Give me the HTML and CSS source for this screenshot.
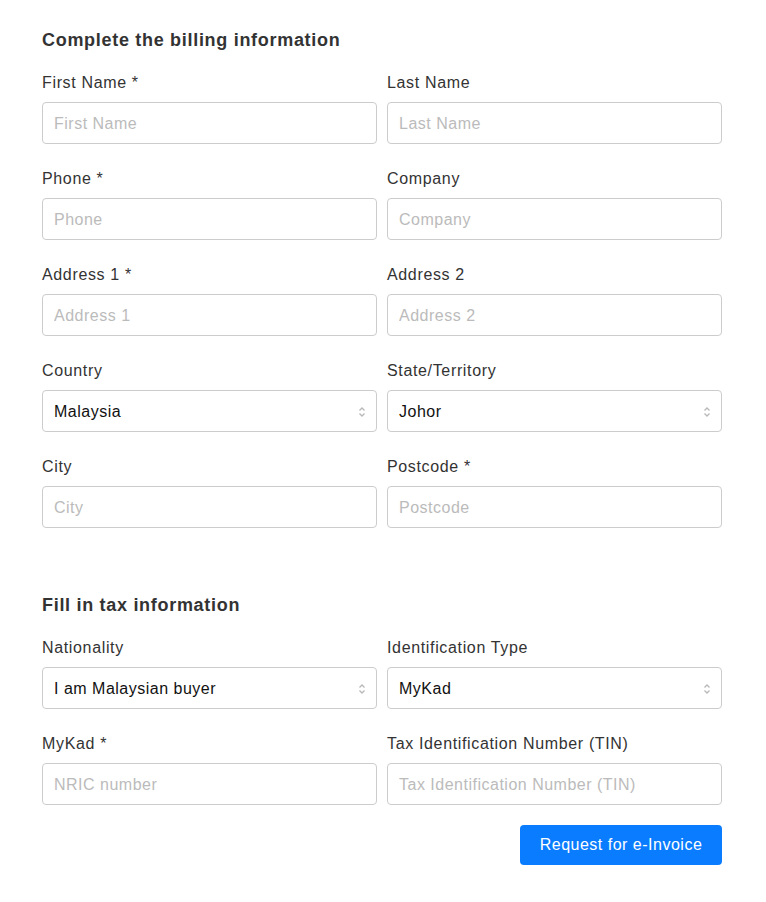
FILE: index.html
```html
<!DOCTYPE html>
<html>
<head>
<meta charset="utf-8">
<link rel="stylesheet" href="styles.css">
</head>
<body>
<div class="page">
  <h2 class="title">Complete the billing information</h2>
  <div class="grid">
    <div class="field"><label>First Name *</label><input placeholder="First Name"></div>
    <div class="field"><label>Last Name</label><input placeholder="Last Name"></div>
    <div class="field"><label>Phone *</label><input placeholder="Phone"></div>
    <div class="field"><label>Company</label><input placeholder="Company"></div>
    <div class="field"><label>Address 1 *</label><input placeholder="Address 1"></div>
    <div class="field"><label>Address 2</label><input placeholder="Address 2"></div>
    <div class="field"><label>Country</label>
      <div class="select"><span>Malaysia</span><svg width="8" height="12" viewBox="0 0 8 12"><path d="M1.5 4.5L4 2l2.5 2.5M1.5 7.5L4 10l2.5-2.5" fill="none" stroke="#b8b8b8" stroke-width="1.3"/></svg></div></div>
    <div class="field"><label>State/Territory</label>
      <div class="select"><span>Johor</span><svg width="8" height="12" viewBox="0 0 8 12"><path d="M1.5 4.5L4 2l2.5 2.5M1.5 7.5L4 10l2.5-2.5" fill="none" stroke="#b8b8b8" stroke-width="1.3"/></svg></div></div>
    <div class="field"><label>City</label><input placeholder="City"></div>
    <div class="field"><label>Postcode *</label><input placeholder="Postcode"></div>
  </div>

  <h2 class="title second">Fill in tax information</h2>
  <div class="grid">
    <div class="field"><label>Nationality</label>
      <div class="select"><span>I am Malaysian buyer</span><svg width="8" height="12" viewBox="0 0 8 12"><path d="M1.5 4.5L4 2l2.5 2.5M1.5 7.5L4 10l2.5-2.5" fill="none" stroke="#b8b8b8" stroke-width="1.3"/></svg></div></div>
    <div class="field"><label>Identification Type</label>
      <div class="select"><span>MyKad</span><svg width="8" height="12" viewBox="0 0 8 12"><path d="M1.5 4.5L4 2l2.5 2.5M1.5 7.5L4 10l2.5-2.5" fill="none" stroke="#b8b8b8" stroke-width="1.3"/></svg></div></div>
    <div class="field"><label>MyKad *</label><input placeholder="NRIC number"></div>
    <div class="field"><label>Tax Identification Number (TIN)</label><input placeholder="Tax Identification Number (TIN)"></div>
  </div>
  <div class="actions"><button class="btn">Request for e-Invoice</button></div>
</div>
</body>
</html>
```
FILE: styles.css
```css
* { box-sizing: border-box; }
body {
  margin: 0;
  background: #fff;
  font-family: "Liberation Sans", Arial, sans-serif;
  color: #333;
}
.page {
  width: 680px;
  margin-left: 42px;
  padding-top: 28px;
}
.title {
  margin: 0 0 20px 0;
  font-size: 18px;
  line-height: 24px;
  font-weight: bold;
  letter-spacing: 0.7px;
  color: #333;
}
.title.second { margin-top: 65px; }
.grid {
  display: grid;
  grid-template-columns: 335px 335px;
  column-gap: 10px;
  row-gap: 24px;
}
.field { display: flex; flex-direction: column; }
.field label {
  font-size: 16px;
  line-height: 20px;
  letter-spacing: 0.65px;
  padding-top: 1px;
  margin-bottom: 9px;
  color: #333;
}
.field input, .select {
  height: 42px;
  border: 1px solid #ccc;
  border-radius: 4px;
  padding: 1px 11px 0 11px;
  font-family: inherit;
  font-size: 16px;
  letter-spacing: 0.5px;
  color: #222;
  outline: none;
  background: #fff;
}
.field input::placeholder { color: #bbb; }
.select {
  display: flex;
  align-items: center;
  justify-content: space-between;
  padding-right: 10px;
  color: #111;
}
.actions {
  display: flex;
  justify-content: flex-end;
  margin-top: 20px;
}
.btn {
  width: 202px;
  height: 40px;
  border: none;
  border-radius: 4px;
  background: #0a7cff;
  color: #fff;
  font-family: inherit;
  font-size: 16px;
  letter-spacing: 0.5px;
}
```
